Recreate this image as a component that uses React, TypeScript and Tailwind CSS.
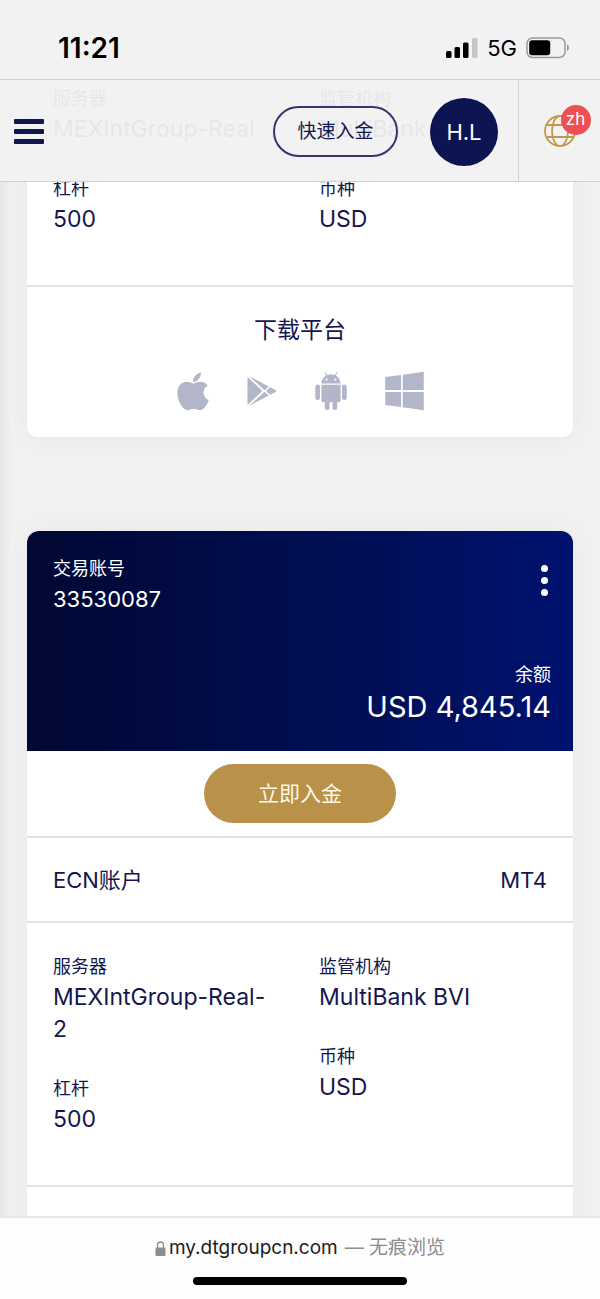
import type { ReactNode } from 'react'
import { FaApple, FaWindows } from 'react-icons/fa'

function Field({ label, children }: { label: string; children: ReactNode }) {
  return (
    <div>
      <p className="text-[18px] leading-[28px]">{label}</p>
      <p className="text-[23px] leading-[32px]">{children}</p>
    </div>
  )
}

function AccountDetails({ server }: { server: ReactNode }) {
  return (
    <section className="grid grid-cols-2 gap-[38px] border-b-2 border-[#e2e2e4] px-[26px] pt-[30px] pb-[50px]">
      <div className="space-y-[30px]">
        <Field label="服务器">{server}</Field>
        <Field label="杠杆">500</Field>
      </div>
      <div className="space-y-[30px]">
        <Field label="监管机构">MultiBank BVI</Field>
        <Field label="币种">USD</Field>
      </div>
    </section>
  )
}

function PlayStore({ className }: { className?: string }) {
  return (
    <svg viewBox="0 0 30 30" fill="currentColor" className={className} aria-hidden="true">
      <path d="M.5.9 15.300 15 .5 29.100Z" />
      <path d="M2.200.2 21.800 10.500 17.500 14.200Z" />
      <path d="M2.200 29.800 21.800 19.500 17.500 15.800Z" />
      <path d="M23.200 11.200 28.900 14.200Q30 15 28.900 15.800L23.200 18.800 18.900 15Z" />
    </svg>
  )
}

function AndroidRobot({ className }: { className?: string }) {
  return (
    <svg viewBox="0 0 32 38" fill="currentColor" className={className} aria-hidden="true">
      <path
        fillRule="evenodd"
        d="M6.4 11.4C6.5 7.8 8.4 5 11.2 3.4L9.300.6 10.100.1 12.100 3C14.600 2 17.400 2 19.900 3L21.900.1 22.700.6 20.800 3.400C23.600 5 25.500 7.800 25.600 11.400ZM11.700 6.500a1 1 0 1 0 0 2 1 1 0 0 0 0-2ZM20.300 6.500a1 1 0 1 0 0 2 1 1 0 0 0 0-2Z"
      />
      <path d="M6.400 12.700H25.600V28.300a2 2 0 0 1-2 2H8.400a2 2 0 0 1-2-2Z" />
      <rect x="0.300" y="12.500" width="4.700" height="15.500" rx="2.300" />
      <rect x="27" y="12.500" width="4.700" height="15.500" rx="2.300" />
      <rect x="9.800" y="26" width="4.700" height="12" rx="2.300" />
      <rect x="17.500" y="26" width="4.700" height="12" rx="2.300" />
    </svg>
  )
}

function Globe() {
  return (
    <svg viewBox="0 0 32 32" fill="none" stroke="#c2994c" strokeWidth="1.800" className="size-8" aria-hidden="true">
      <circle cx="16" cy="16" r="15" />
      <ellipse cx="16" cy="16" rx="8" ry="15" />
      <path d="M2.500 10h27M2.500 22h27" />
    </svg>
  )
}

function StatusBar() {
  return (
    <div className="flex h-[79px] items-center justify-between pt-[17px] pr-[30px] pl-[58px] text-black">
      <span className="text-[28px] leading-[32px] font-semibold">11:21</span>
      <div className="flex items-center gap-[9px]">
        <svg viewBox="0 0 32 20" className="h-5 w-8" aria-hidden="true">
          <rect x="0" y="13" width="5.500" height="7" rx="1.500" />
          <rect x="8.500" y="9" width="5.500" height="11" rx="1.500" />
          <rect x="17" y="4.500" width="5.500" height="15.500" rx="1.500" />
          <rect x="26" y="0" width="5.500" height="20" rx="1.500" fill="#c6c6c6" />
        </svg>
        <span className="text-[22px] leading-[32px]">5G</span>
        <svg viewBox="0 0 44 22" className="h-[22px] w-11" aria-hidden="true">
          <rect x="1" y="1" width="38" height="19.500" rx="5.500" fill="none" stroke="#9a9a9a" strokeWidth="1.500" />
          <rect x="3.200" y="3.200" width="21" height="15" rx="3" />
          <path d="M41 7.500c2.600 1 2.600 5.500 0 6.500Z" fill="#9a9a9a" />
        </svg>
      </div>
    </div>
  )
}

function Header() {
  return (
    <header className="absolute inset-x-0 top-0 z-20 bg-[#f1f1f1]/95">
      <StatusBar />
      <nav className="flex h-[103px] border-y border-[#d2d2d4]">
        <div className="flex flex-1 items-center pt-[2px] pr-5 pl-[14px]">
          <button type="button" aria-label="菜单" className="space-y-[5px]">
            <span className="block h-[5px] w-[30px] rounded-[1px] bg-[#0f1650]" />
            <span className="block h-[5px] w-[30px] rounded-[1px] bg-[#0f1650]" />
            <span className="block h-[5px] w-[30px] rounded-[1px] bg-[#0f1650]" />
          </button>
          <button
            type="button"
            className="ml-auto h-[51px] w-[125px] rounded-full border-2 border-[#34376a] text-[19px] leading-[28px]"
          >
            快速入金
          </button>
          <button
            type="button"
            className="ml-8 size-[68px] rounded-full bg-[#0c1452] text-[22px] leading-[32px] text-white"
          >
            H.L
          </button>
        </div>
        <div className="flex w-[82px] items-center justify-center border-l border-[#d2d2d4]">
          <button type="button" aria-label="语言" className="relative">
            <Globe />
            <span className="absolute -top-[10px] left-[17px] flex size-[30px] items-center justify-center rounded-full bg-[#ee4f55] text-[17px] text-white">
              zh
            </span>
          </button>
        </div>
      </nav>
    </header>
  )
}

function Footer() {
  return (
    <footer className="absolute inset-x-0 bottom-0 z-20 flex h-[83px] flex-col items-center justify-between border-t-2 border-[#e6e6e6] bg-[#fdfdfd] pt-[14px] pb-[14px]">
      <p className="flex items-center text-[19px] leading-[32px] text-[#8d8d8d]">
        <svg viewBox="0 0 11 15" className="mr-[3px] h-[15px] w-[11px]" aria-hidden="true">
          <path d="M2.500 7V4a3 3 0 0 1 6 0v3" fill="none" stroke="#8d8d8d" strokeWidth="1.300" />
          <rect x="0.500" y="6.500" width="10" height="8.500" rx="1.200" fill="#8d8d8d" />
        </svg>
        <span className="text-[#1c1c1c]">my.dtgroupcn.com</span>
        <span className="ml-[7px]">— 无痕浏览</span>
      </p>
      <div className="h-2 w-[214px] rounded-full bg-black" />
    </footer>
  )
}

export default function App() {
  return (
    <div className="relative h-screen overflow-hidden bg-[#f1f1f1] font-[Inter,'Noto_Sans_CJK_SC',sans-serif] text-[#14174f]">
      <Header />

      <div className="absolute inset-y-0 left-0 w-3 bg-linear-to-r from-[#e6e6e6] to-transparent" />

      <main className="space-y-[94px] px-[27px] pt-[55px]">
        <article className="overflow-hidden rounded-b-[10px] bg-white shadow-[0_0_24px_rgba(0,0,0,0.04)]">
          <AccountDetails server="MEXIntGroup-Real" />
          <section className="pt-[27px] pb-6 text-center">
            <h2 className="text-[23px] leading-[32px]">下载平台</h2>
            <div className="mt-[23px] flex items-center justify-center gap-[38px] text-[#b3b5c8]">
              <a href="#ios" aria-label="iOS">
                <FaApple className="h-[43px] w-8" />
              </a>
              <a href="#google-play" aria-label="Google Play">
                <PlayStore className="size-[30px]" />
              </a>
              <a href="#android" aria-label="Android">
                <AndroidRobot className="h-[38px] w-8" />
              </a>
              <a href="#windows" aria-label="Windows">
                <FaWindows className="h-[44px] w-[39px]" />
              </a>
            </div>
          </section>
        </article>

        <article className="overflow-hidden rounded-t-[12px] bg-white shadow-[0_0_24px_rgba(0,0,0,0.04)]">
          <div className="flex h-[220px] flex-col justify-between bg-linear-to-r from-[#010833] to-[#00126f] pt-6 pr-[22px] pb-[26px] pl-[26px] text-white">
            <div className="flex items-start justify-between">
              <div>
                <p className="text-[18px] leading-[28px]">交易账号</p>
                <p className="text-[22px] leading-[32px]">33530087</p>
              </div>
              <button type="button" aria-label="更多" className="space-y-[5px] px-[3px] pt-[10px]">
                <span className="block size-[7px] rounded-full bg-white" />
                <span className="block size-[7px] rounded-full bg-white" />
                <span className="block size-[7px] rounded-full bg-white" />
              </button>
            </div>
            <div className="text-right">
              <p className="text-[18px] leading-[28px]">余额</p>
              <p className="text-[29px] leading-[36px]">USD 4,845.14</p>
            </div>
          </div>

          <div className="flex justify-center border-b-2 border-[#e2e2e4] py-[13px]">
            <button
              type="button"
              className="h-[59px] w-[192px] rounded-full bg-[#ba9149] text-[21px] leading-[32px] text-[#fff8e6]"
            >
              立即入金
            </button>
          </div>

          <div className="flex h-[85px] items-center justify-between border-b-2 border-[#e2e2e4] px-[26px] text-[22px] leading-[32px]">
            <span>ECN账户</span>
            <span>MT4</span>
          </div>

          <AccountDetails
            server={
              <>
                MEXIntGroup-Real-
                <br />2
              </>
            }
          />
          <div className="h-[150px]" />
        </article>
      </main>

      <Footer />
    </div>
  )
}
